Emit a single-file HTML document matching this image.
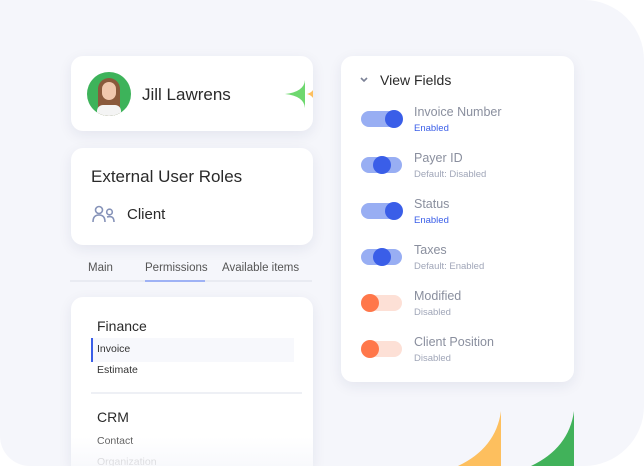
<!DOCTYPE html>
<html style="width:644px;height:466px;overflow:hidden"><head><style>
*{margin:0;padding:0;box-sizing:border-box}
body{width:644px;height:466px;background:#fff;position:relative;overflow:hidden;font-family:"Liberation Sans",sans-serif}
.bg{position:absolute;left:0;top:0;width:644px;height:466px;background:#f5f6fb;border-radius:0 60px 60px 30px}
.card{position:absolute;background:#fff;border-radius:12px;box-shadow:0 4px 14px rgba(30,40,90,.08)}
.t{position:absolute;white-space:nowrap}
.tg{position:absolute;width:41px;height:16px;border-radius:8px}
.kn{position:absolute;width:18px;height:18px;border-radius:50%;top:-1px}
</style></head><body>
<div class="bg"></div>
<svg style="position:absolute;left:0;top:0" width="644" height="466">
<path d="M501,411 L501,466 L458,466 Q496,448 501,411Z" fill="#fdbf5e"/>
<path d="M574,411 L574,466 L531,466 Q569,448 574,411Z" fill="#41b25a"/>
</svg>
<div class="card" style="left:71px;top:56px;width:242px;height:75px;overflow:hidden">
<div style="position:absolute;left:16px;top:16px;width:44px;height:44px;border-radius:50%;background:#3db35a;overflow:hidden">
<div style="position:absolute;left:11px;top:6px;width:22px;height:40px;border-radius:11px 11px 4px 4px;background:#8a5a3c"></div>
<div style="position:absolute;left:15px;top:10px;width:14px;height:18px;border-radius:7px;background:#f0c8ae"></div>
<div style="position:absolute;left:10px;top:33px;width:24px;height:14px;border-radius:6px 6px 0 0;background:#f4f4f4"></div>
</div>
<div class="t" style="left:71px;top:29px;font-size:17px;color:#2a2a2a">Jill Lawrens</div>
<svg style="position:absolute;left:212px;top:22px" width="40" height="32">
<path d="M34,2 Q36,14 44,16 Q36,18 34,30 Q32,18 24,16 Q32,14 34,2Z" fill="#fdbf5e"/>
<path d="M22,2 Q21,14 2,16 Q21,18 22,30Z" fill="#6ed86f"/>
</svg>
</div>
<div class="card" style="left:71px;top:148px;width:242px;height:97px">
<div class="t" style="left:20px;top:19px;font-size:17px;color:#2a2a2a">External User Roles</div>
<svg style="position:absolute;left:21px;top:57px" width="24" height="18" fill="none" stroke="#8592b8" stroke-width="1.6">
<circle cx="7" cy="5" r="3.5"/><path d="M1,17 Q1,10 7,10 Q13,10 13,17"/>
<circle cx="17.5" cy="7" r="2.8"/><path d="M15,12 Q22,10 22,17"/>
</svg>
<div class="t" style="left:56px;top:58px;font-size:15px;color:#2a2a2a">Client</div>
</div>
<div class="t" style="left:88px;top:262px;font-size:11.5px;color:#555">Main</div>
<div class="t" style="left:145px;top:262px;font-size:11.5px;color:#555">Permissions</div>
<div class="t" style="left:222px;top:262px;font-size:11.5px;color:#555">Available items</div>
<div style="position:absolute;left:70px;top:280px;width:242px;height:2px;background:#e9ebf2"></div>
<div style="position:absolute;left:145px;top:280px;width:60px;height:2px;background:#9fb2f5"></div>
<div class="card" style="left:71px;top:297px;width:242px;height:169px;overflow:hidden;border-radius:12px 12px 0 0">
<div class="t" style="left:26px;top:21px;font-size:14px;color:#2a2a2a">Finance</div>
<div style="position:absolute;left:20px;top:41px;width:203px;height:24px;background:#f7f8fc;border-left:2px solid #3a5ee8"></div>
<div class="t" style="left:26px;top:46px;font-size:10.5px;color:#333">Invoice</div>
<div class="t" style="left:26px;top:67px;font-size:10.5px;color:#333">Estimate</div>
<div style="position:absolute;left:20px;top:95px;width:211px;height:2px;background:#eef0f5"></div>
<div class="t" style="left:26px;top:112px;font-size:14px;color:#2a2a2a">CRM</div>
<div class="t" style="left:26px;top:138px;font-size:10.5px;color:#555">Contact</div>
<div class="t" style="left:26px;top:159px;font-size:10.5px;color:#bbb">Organization</div>
<div style="position:absolute;left:0;top:140px;width:242px;height:30px;background:linear-gradient(rgba(245,246,251,0),rgba(245,246,251,.7))"></div>
</div>
<div class="card" style="left:341px;top:56px;width:233px;height:326px">
<svg style="position:absolute;left:19px;top:21px" width="8" height="6"><path d="M1,1 L4,4 L7,1" stroke="#7b8196" stroke-width="1.6" fill="none"/></svg>
<div class="t" style="left:39px;top:16px;font-size:14px;color:#2a2a2a">View Fields</div>

<div class="tg" style="left:20px;top:55px;background:#98aef3"><div class="kn" style="left:24px;background:#3a5ee8"></div></div>
<div class="t" style="left:73px;top:49px;font-size:12.5px;color:#8a8f9e">Invoice Number</div>
<div class="t" style="left:73px;top:67px;font-size:9.5px;color:#3a5ee8">Enabled</div>

<div class="tg" style="left:20px;top:101px;background:#98aef3"><div class="kn" style="left:12px;background:#3a5ee8"></div></div>
<div class="t" style="left:73px;top:95px;font-size:12.5px;color:#8a8f9e">Payer ID</div>
<div class="t" style="left:73px;top:113px;font-size:9.5px;color:#a0a6b8">Default: Disabled</div>

<div class="tg" style="left:20px;top:147px;background:#98aef3"><div class="kn" style="left:24px;background:#3a5ee8"></div></div>
<div class="t" style="left:73px;top:141px;font-size:12.5px;color:#8a8f9e">Status</div>
<div class="t" style="left:73px;top:159px;font-size:9.5px;color:#3a5ee8">Enabled</div>

<div class="tg" style="left:20px;top:193px;background:#98aef3"><div class="kn" style="left:12px;background:#3a5ee8"></div></div>
<div class="t" style="left:73px;top:187px;font-size:12.5px;color:#8a8f9e">Taxes</div>
<div class="t" style="left:73px;top:205px;font-size:9.5px;color:#a0a6b8">Default: Enabled</div>

<div class="tg" style="left:20px;top:239px;background:#fde0d6"><div class="kn" style="left:0;background:#ff774a"></div></div>
<div class="t" style="left:73px;top:233px;font-size:12.5px;color:#8a8f9e">Modified</div>
<div class="t" style="left:73px;top:251px;font-size:9.5px;color:#a0a6b8">Disabled</div>

<div class="tg" style="left:20px;top:285px;background:#fde0d6"><div class="kn" style="left:0;background:#ff774a"></div></div>
<div class="t" style="left:73px;top:279px;font-size:12.5px;color:#8a8f9e">Client Position</div>
<div class="t" style="left:73px;top:297px;font-size:9.5px;color:#a0a6b8">Disabled</div>
</div>
</body></html>
